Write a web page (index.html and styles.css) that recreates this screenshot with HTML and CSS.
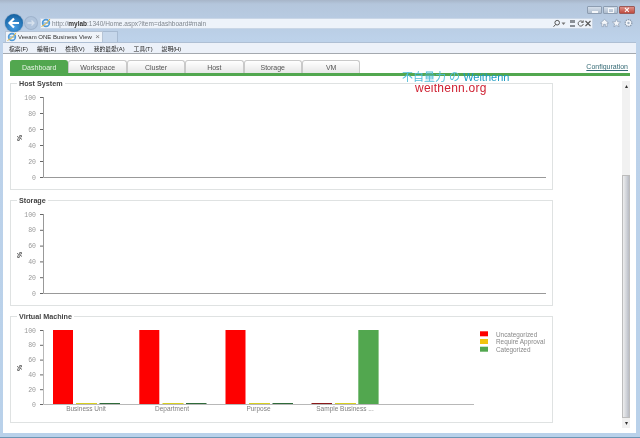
FILE: index.html
```html
<!DOCTYPE html>
<html lang="zh-Hant">
<head>
<meta charset="utf-8">
<title>Veeam ONE Business View</title>
<link rel="stylesheet" href="styles.css">
</head>
<body>
<div class="window">
  <div class="caption">
    <div class="winbtns">
      <span class="winbtn"><i class="glyph-min"></i></span>
      <span class="winbtn"><i class="glyph-max"></i></span>
      <span class="winbtn close"><i class="glyph-x">×</i></span>
    </div>
  </div>
  <div class="navrow">
    <span class="back">
      <svg width="18" height="18" viewBox="0 0 18 18"><path d="M14 9H5M9 4.500L4.500 9L9 13.500" fill="none" stroke="#fff" stroke-width="2.200"/></svg>
    </span>
    <span class="forward">
      <svg width="12" height="12" viewBox="0 0 12 12"><path d="M2.500 6H9M6.500 3.500L9 6L6.500 8.500" fill="none" stroke="#d8e2ee" stroke-width="1.300"/></svg>
    </span>
    <div class="address">
      <svg class="ie" width="10" height="10" viewBox="0 0 10 10"><circle cx="5" cy="5" r="3.400" fill="none" stroke="#4f9ad8" stroke-width="1.600"/><path d="M1.500 5H8.500" stroke="#4f9ad8" stroke-width="1"/><path d="M0.500 8.500Q5 7 9 1" fill="none" stroke="#e2b53c" stroke-width="1"/></svg>
      <span class="url">http://<b>mylab</b>:1340/Home.aspx?item=dashboard#main</span>
      <span class="addr-tools">
        <svg width="7" height="9" viewBox="0 0 7 9"><circle cx="4.200" cy="3.700" r="2.300" fill="none" stroke="#555"/><path d="M2.500 5.500L0.500 7.800" stroke="#555"/></svg>
        <svg width="5" height="9" viewBox="0 0 5 9"><path d="M0.500 3.500H4.500L2.500 6Z" fill="#777"/></svg>
        <svg class="gap" width="7" height="9" viewBox="0 0 7 9"><path d="M1 1H6V4H1ZM1 6H6V8H1Z" fill="#8a8f96"/></svg>
        <svg width="7" height="9" viewBox="0 0 7 9"><path d="M6 3.200A2.600 2.600 0 1 0 6.300 5M6.200 1.300V3.400H4.200" fill="none" stroke="#666"/></svg>
        <svg width="6" height="9" viewBox="0 0 6 9"><path d="M0.500 2L5.500 7M5.500 2L0.500 7" stroke="#555" stroke-width="1.100"/></svg>
      </span>
    </div>
    <div class="tools">
      <svg width="9" height="10" viewBox="0 0 10 10"><path d="M0.500 5L5 1L9.500 5H8V9H6V6.500H4V9H2V5Z" fill="#f3f6fa" stroke="#8a99ad" stroke-width="0.700"/></svg>
      <svg width="9" height="10" viewBox="0 0 10 10"><path d="M5 0.500L6.300 3.600L9.600 3.900L7.100 6L7.900 9.300L5 7.500L2.100 9.300L2.900 6L0.400 3.900L3.700 3.600Z" fill="#f3f6fa" stroke="#8a99ad" stroke-width="0.700"/></svg>
      <svg width="9" height="10" viewBox="0 0 10 10"><circle cx="5" cy="5" r="3.700" fill="#f3f6fa" stroke="#8a99ad" stroke-width="1.400" stroke-dasharray="1.500 0.800"/><circle cx="5" cy="5" r="1.300" fill="#a3b1c2"/></svg>
    </div>
  </div>
  <div class="tabrow">
    <div class="ietab">
      <svg width="10" height="10" viewBox="0 0 10 10"><circle cx="5" cy="5" r="3.400" fill="none" stroke="#4f9ad8" stroke-width="1.600"/><path d="M1.500 5H8.500" stroke="#4f9ad8" stroke-width="1"/><path d="M0.500 8.500Q5 7 9 1" fill="none" stroke="#e2b53c" stroke-width="1"/></svg>
      <span class="ietab-title">Veeam ONE Business View</span>
      <span class="ietab-close">×</span>
    </div>
    <div class="ietab-new"></div>
  </div>
  <div class="menubar">
    <span>檔案(F)</span><span>編輯(E)</span><span>檢視(V)</span><span>我的最愛(A)</span><span>工具(T)</span><span>說明(H)</span>
  </div>
  <div class="viewport">
    <div class="apptabs">
      <span class="apptab active">Dashboard</span>
      <span class="apptab">Workspace</span>
      <span class="apptab">Cluster</span>
      <span class="apptab">Host</span>
      <span class="apptab">Storage</span>
      <span class="apptab">VM</span>
      <a class="config">Configuration</a>
    </div>
    <div class="greenbar"></div>
    <div class="watermark">
      <div class="wm-1">不自量力 の <span class="wm-blue">Weithenn</span></div>
      <div class="wm-2">weithenn.org</div>
    </div>
    <div class="body-row">
      <div class="panels">
        <section class="panel">
          <h3 class="legend">Host System</h3>
          <svg class="chart" width="543" height="107" viewBox="0 0 543 107">
            <g class="ylabels">
              <text x="26" y="16.500">100</text><text x="26" y="32.500">80</text><text x="26" y="48.500">60</text><text x="26" y="64.500">40</text><text x="26" y="80.500">20</text><text x="26" y="96.500">0</text>
            </g>
            <path class="ticks" d="M30 14.500h3M30 30.500h3M30 46.500h3M30 62.500h3M30 78.500h3M30 94.500h3"/>
            <path class="axis" d="M33.500 14V94.500H536"/>
            <text class="unit" transform="translate(12 55) rotate(-90)">%</text>
          </svg>
        </section>
        <section class="panel">
          <h3 class="legend">Storage</h3>
          <svg class="chart" width="543" height="106" viewBox="0 0 543 106">
            <g class="ylabels">
              <text x="26" y="16.500">100</text><text x="26" y="32.300">80</text><text x="26" y="48.100">60</text><text x="26" y="63.900">40</text><text x="26" y="79.700">20</text><text x="26" y="95.500">0</text>
            </g>
            <path class="ticks" d="M30 14.500h3M30 30.300h3M30 46.100h3M30 61.900h3M30 77.700h3M30 93.500h3"/>
            <path class="axis" d="M33.500 14V93.500H536"/>
            <text class="unit" transform="translate(12 55) rotate(-90)">%</text>
          </svg>
        </section>
        <section class="panel">
          <h3 class="legend">Virtual Machine</h3>
          <svg class="chart" width="543" height="107" viewBox="0 0 543 107">
            <g class="ylabels">
              <text x="26" y="16.500">100</text><text x="26" y="31.300">80</text><text x="26" y="46.100">60</text><text x="26" y="60.900">40</text><text x="26" y="75.700">20</text><text x="26" y="90.500">0</text>
            </g>
            <path class="ticks" d="M30 14.500h3M30 29.300h3M30 44.100h3M30 58.900h3M30 73.700h3M30 88.500h3"/>
            <text class="unit" transform="translate(12 52) rotate(-90)">%</text>
            <rect class="red" x="43" y="14" width="20" height="74"/>
            <rect class="yellow" x="66" y="87" width="21" height="1"/>
            <rect class="green-d" x="89.500" y="87" width="20.500" height="1"/>
            <rect class="red" x="129.300" y="14" width="20" height="74"/>
            <rect class="yellow" x="152.500" y="87" width="21" height="1"/>
            <rect class="green-d" x="176" y="87" width="20.500" height="1"/>
            <rect class="red" x="215.500" y="14" width="20" height="74"/>
            <rect class="yellow" x="239" y="87" width="21" height="1"/>
            <rect class="green-d" x="262.500" y="87" width="20.500" height="1"/>
            <rect class="red-d" x="301.500" y="87" width="20.500" height="1"/>
            <rect class="yellow" x="325" y="87" width="21" height="1"/>
            <rect class="green" x="348.300" y="14" width="20.300" height="74"/>
            <path class="axis light" d="M33.500 14V88.500H464"/>
            <g class="xlabels">
              <text x="76" y="94.500">Business Unit</text>
              <text x="162" y="94.500">Department</text>
              <text x="248.500" y="94.500">Purpose</text>
              <text x="335" y="94.500">Sample Business ...</text>
            </g>
            <rect class="red" x="470" y="15.300" width="8" height="5"/>
            <rect class="amber" x="470" y="23" width="8" height="5"/>
            <rect class="green" x="470" y="30.700" width="8" height="5"/>
            <g class="legend-text">
              <text x="486" y="20.500">Uncategorized</text>
              <text x="486" y="28.200">Require Approval</text>
              <text x="486" y="35.900">Categorized</text>
            </g>
          </svg>
        </section>
      </div>
      <div class="scrollbar">
        <span class="arrow">▴</span>
        <div class="thumb"></div>
        <span class="arrow">▾</span>
      </div>
    </div>
  </div>
</div>
</body>
</html>
```
FILE: styles.css
```css
* { box-sizing: border-box; }
html, body { margin: 0; padding: 0; background: #fff; }
body { width: 640px; height: 438px; overflow: hidden; font-family: "Liberation Sans", "Noto Sans CJK TC", sans-serif; }
.window { position: relative; width: 640px; height: 438px; padding: 0 4px 4px 3px; display: flex; flex-direction: column; background: linear-gradient(#a7b5c8 0, #b4c6dc 4px, #bdd2ea 40px, #b9d1ea 100%); border-bottom: 1px solid #6d97b5; overflow: hidden; filter: blur(0.4px); }
.caption { height: 15px; flex: none; display: flex; justify-content: flex-end; padding: 6px 1px 0 0; }
.winbtns { display: flex; gap: 1px; }
.winbtn { width: 15px; height: 8px; display: flex; align-items: center; justify-content: center; background: linear-gradient(#d5dfeb, #aebccd); border: 1px solid #8d9db1; border-radius: 1px; }
.winbtn.close { width: 16px; background: linear-gradient(#dd9088, #c04c40); border-color: #9b5a58; }
.glyph-min { width: 6px; height: 2px; margin-top: 3px; background: #f4f6f9; border: 0; }
.glyph-max { width: 6px; height: 5px; border: 1px solid #f4f6f9; }
.glyph-x { font: bold 9px/6px "Liberation Sans", sans-serif; color: #fff; }
.navrow { height: 16px; flex: none; display: flex; align-items: center; position: relative; }
.back { width: 18px; height: 18px; margin-left: 2px; flex: none; border-radius: 50%; display: flex; background: radial-gradient(circle at 50% 70%, #4aa0e6, #13609f 80%); box-shadow: 0 0 1px #0c3f6d; }
.forward { width: 12px; height: 12px; margin-left: 2px; flex: none; border-radius: 50%; display: flex; background: #b0c4dc; box-shadow: 0 0 0 1px #9fb3cc; }
.address { width: 553px; height: 11px; margin-left: 3px; flex: none; display: flex; align-items: center; background: #eef3fa; border: 1px solid #c9d6e6; }
.ie { flex: none; }
.url { margin-left: 1px; font-size: 6.500px; color: #7f868e; white-space: nowrap; }
.url b { color: #333; font-weight: bold; }
.addr-tools { margin-left: auto; margin-right: 1px; display: flex; align-items: center; gap: 1px; }
.addr-tools .gap { margin-left: 2px; }
.tools { display: flex; gap: 3px; margin-left: 7px; }
.tabrow { height: 11px; flex: none; display: flex; align-items: flex-end; }
.ietab { width: 98px; height: 11px; margin-left: 2px; padding: 0 2px 0 1px; display: flex; align-items: center; background: #f0f4f9; border: 1px solid #b6c4d5; border-bottom: 0; }
.ietab svg { flex: none; }
.ietab-title { margin-left: 1px; font-size: 6px; color: #333; white-space: nowrap; flex: 1; }
.ietab-close { font-size: 8px; line-height: 8px; color: #777; }
.ietab-new { width: 15px; height: 11px; background: #c6d7eb; border: 1px solid #a7bad1; border-left: 0; border-bottom: 0; }
.menubar { height: 12px; flex: none; display: flex; gap: 9px; padding-left: 6px; align-items: center; background: #ecf1f9; border-top: 1px solid #aebfd4; border-bottom: 1px solid #a4a9af; font-size: 5.800px; color: #222; }
.viewport { flex: 1; min-height: 0; position: relative; background: #fff; padding: 6px 6px 0 7px; }
.apptabs { height: 13px; display: flex; align-items: stretch; }
.apptab { width: 58.400px; display: flex; align-items: center; justify-content: center; font-size: 7px; color: #555; background: linear-gradient(#fff, #e7e7e7); border: 1px solid #c9c9c9; border-bottom: 0; border-radius: 3px 3px 0 0; }
.apptab.active { background: #52a74f; border-color: #52a74f; color: #e8f3e6; }
.config { margin-left: auto; margin-right: 2px; align-self: center; font-size: 7px; color: #356a75; text-decoration: underline; }
.greenbar { height: 3px; background: #52a74f; }
.watermark { position: absolute; left: 399px; top: 18px; width: 108px; }
.wm-1 { font-size: 11px; line-height: 11px; color: #53bed9; white-space: nowrap; }
.wm-blue { color: #1c9bc2; }
.wm-2 { font-size: 12px; line-height: 11px; color: #cf2233; margin-left: 13px; letter-spacing: 0.020em; }
.body-row { display: flex; padding-top: 7px; }
.panels { width: 543px; display: flex; flex-direction: column; gap: 9.500px; }
.panel { position: relative; height: 107px; border: 1px solid #dfe2e2; }
.panel:nth-child(2) { height: 106.500px; }
.panel:nth-child(3) { height: 107.500px; }
.legend { position: absolute; left: 6px; top: -5px; margin: 0; padding: 0 2px; background: #fff; font-size: 7.200px; line-height: 9px; font-weight: bold; color: #444; }
.chart { display: block; margin: -1px; overflow: visible; }
.ylabels text { font: 6.500px "Liberation Mono", monospace; fill: #999; text-anchor: end; }
.ticks { stroke: #666; stroke-width: 1; fill: none; }
.axis { stroke: #999; stroke-width: 1; fill: none; }
.axis.light { stroke: #b8b8b8; }
.unit { font: bold 7px "Liberation Sans", sans-serif; fill: #444; text-anchor: middle; }
.red { fill: #fe0000; }
.red-d { fill: #8b1a1a; }
.yellow { fill: #d8d020; }
.amber { fill: #f1c40f; }
.green { fill: #52a74f; }
.green-d { fill: #2f6b3a; }
.xlabels text { font: 6.500px "Liberation Sans", sans-serif; fill: #808080; text-anchor: middle; }
.legend-text text { font: 6.400px "Liberation Sans", sans-serif; fill: #888; }
.scrollbar { width: 8px; height: 347px; margin-left: 69px; margin-top: -2px; display: flex; flex-direction: column; align-items: center; background: #f1f1f1; }
.arrow { height: 10px; font-size: 6px; line-height: 10px; color: #333; flex: none; }
.thumb { width: 8px; margin-top: auto; height: 243px; background: linear-gradient(90deg, #eee, #cfd2d8 60%, #b9bcc4); border: 1px solid #bdbdbd; }
```
